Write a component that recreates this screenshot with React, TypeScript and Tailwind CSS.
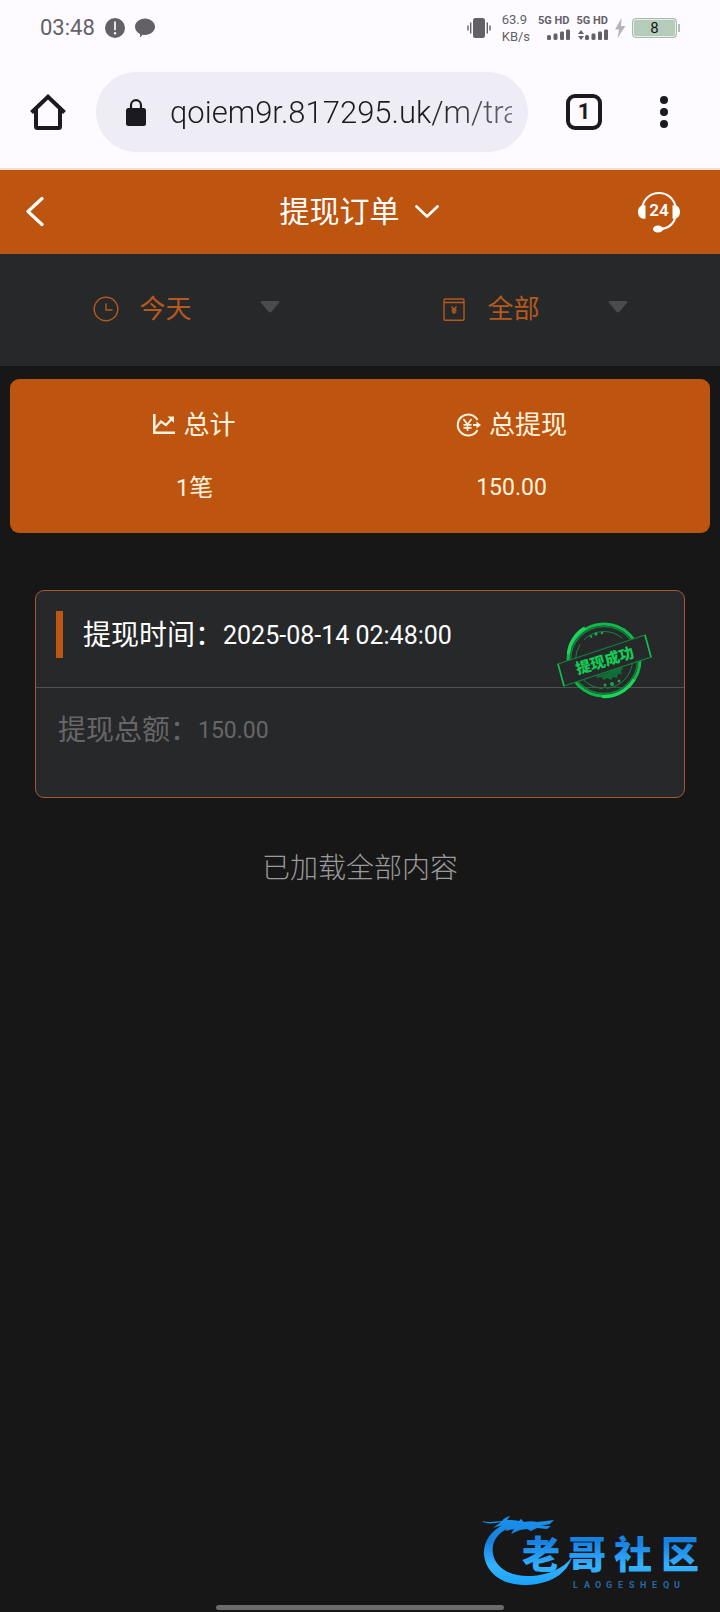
import React from 'react';

const filterIconClass = 'h-[26px] w-[26px] shrink-0';

function SignalBars({ roaming = false }: { roaming?: boolean }) {
  return (
    <div className="flex flex-col items-end gap-[2px]">
      <span className="text-[11px] leading-[12px] font-bold whitespace-nowrap">5G HD</span>
      <svg viewBox="0 0 31 12" className="h-[12px] w-[31px]" fill="currentColor" aria-hidden="true">
        {roaming && <path d="M4 1 7 5H1zM4 11 1 7h6z" />}
        <rect x="8" y="6" width="4" height="5" rx="1.6" />
        <rect x="14.500" y="4.500" width="4" height="6.500" rx="1.400" />
        <rect x="21" y="2.500" width="4" height="8.500" rx="1.200" />
        <rect x="27" y="0.500" width="4" height="10.500" rx="1.200" />
      </svg>
    </div>
  );
}

function StatusBar() {
  return (
    <div className="flex h-14 items-center justify-between pr-10 pl-10 text-[#636166]">
      <div className="flex items-center gap-[10px]">
        <time className="text-[22px] leading-none">03:48</time>
        <svg viewBox="0 0 20 20" className="h-5 w-5" aria-hidden="true">
          <circle cx="10" cy="10" r="10" fill="currentColor" />
          <path d="M10 4v7.500" stroke="#fdfbff" strokeWidth="1.700" strokeLinecap="round" />
          <circle cx="10" cy="15.300" r="1.200" fill="#fdfbff" />
        </svg>
        <svg viewBox="0 0 20 20" className="h-5 w-5" fill="currentColor" aria-hidden="true">
          <path d="M10 .5c5.500 0 10 3.700 10 8.300S15.500 17 10 17c-.9 0-1.700-.1-2.500-.2-.6.900-1.500 1.900-2.600 2.700.3-1.200.3-2.500.1-3.500C2 14.500 0 11.900 0 8.800 0 4.200 4.500.5 10 .5z" />
        </svg>
      </div>
      <div className="flex items-center">
        <svg viewBox="0 0 24 20" className="mr-[11px] h-5 w-6" aria-hidden="true">
          <rect x="6" y="0" width="12" height="20" rx="2.500" fill="currentColor" />
          <path d="M1 8v4M3.700 5v10M20.300 5v10M23 8v4" stroke="currentColor" strokeWidth="1.400" strokeLinecap="round" />
        </svg>
        <div className="mr-2 text-[13px] leading-[17px]">
          <div>63.9</div>
          <div>KB/s</div>
        </div>
        <div className="flex gap-[7px]">
          <SignalBars />
          <SignalBars roaming />
        </div>
        <svg viewBox="0 0 12 20" className="mx-[6px] h-5 w-3" fill="#b5b3b8" aria-hidden="true">
          <path d="M7.500 0 1 11.500h4L3.500 20 11.500 8H7z" />
        </svg>
        <div className="flex items-center gap-px">
          <div className="flex h-5 w-[45px] items-center justify-center rounded-[4px] border border-[#a9b8ad] bg-[#b5ccba] text-[15px] leading-none text-[#17171a] ring-1 ring-[#e6f0e8] ring-inset">
            8
          </div>
          <div className="h-2 w-[2px] bg-[#b9b8bb]" />
        </div>
      </div>
    </div>
  );
}

function BrowserBar() {
  return (
    <div className="flex h-28 items-center border-0 pr-8 pl-[30px] text-[#1b1b1f]">
      <button type="button" aria-label="主页" className="shrink-0">
        <svg viewBox="0 0 36 36" className="h-9 w-9" fill="none" stroke="currentColor" strokeWidth="4" aria-hidden="true">
          <path d="M1.500 18.500 18 2.800l16.500 15.700" strokeLinejoin="miter" />
          <path d="M6 15v17.500q0 1.500 1.500 1.500h21q1.500 0 1.500-1.500V15" />
        </svg>
      </button>
      <div className="mr-[38px] ml-[30px] flex h-20 min-w-0 flex-1 items-center rounded-full bg-[#eeecf5] pr-4 pl-[30px]">
        <svg viewBox="0 0 20 27" className="mr-6 h-[27px] w-5 shrink-0" aria-hidden="true">
          <path d="M5 10V6.200a5 5 0 0 1 10 0V10" fill="none" stroke="currentColor" strokeWidth="2.200" />
          <rect y="9" width="20" height="18" rx="2.500" fill="currentColor" />
        </svg>
        <input
          aria-label="网址"
          defaultValue="qoiem9r.817295.uk/m/tra"
          className="h-12 w-full min-w-0 flex-1 bg-linear-to-r from-[#1b1b1f] from-75% to-[#6a6972] bg-clip-text text-[31px] font-light text-transparent outline-none"
        />
      </div>
      <button type="button" aria-label="标签页" className="flex h-9 w-9 shrink-0 items-center justify-center rounded-[9px] border-4 border-[#1b1b1f] text-[22px] leading-none font-bold">
        1
      </button>
      <button type="button" aria-label="菜单" className="ml-[38px] flex w-12 shrink-0 justify-center">
        <svg viewBox="0 0 8 32" className="h-8 w-2" fill="currentColor" aria-hidden="true">
          <circle cx="4" cy="4" r="4" />
          <circle cx="4" cy="16" r="4" />
          <circle cx="4" cy="28" r="4" />
        </svg>
      </button>
    </div>
  );
}

function PageHeader() {
  return (
    <header className="grid h-[84px] grid-cols-[1fr_auto_1fr] items-center bg-[#bd540f] pr-10 pl-[26px] text-white">
      <button type="button" aria-label="返回" className="justify-self-start">
        <svg viewBox="0 0 18 30" className="h-[30px] w-[18px]" fill="none" stroke="currentColor" strokeWidth="3.200" strokeLinecap="round" strokeLinejoin="round" aria-hidden="true">
          <path d="M16 1.500 2 14.500l14 13" />
        </svg>
      </button>
      <button type="button" className="ml-3 flex items-center gap-[15px]">
        <h1 className="text-[30px] leading-none">提现订单</h1>
        <svg viewBox="0 0 24 14" className="h-[14px] w-6" fill="none" stroke="currentColor" strokeWidth="2.600" strokeLinecap="round" strokeLinejoin="round" aria-hidden="true">
          <path d="m1.500 1.500 10.500 10 10.500-10" />
        </svg>
      </button>
      <button type="button" aria-label="24小时客服" className="justify-self-end">
        <svg viewBox="0 0 42 42" className="h-[42px] w-[42px]" aria-hidden="true">
          <path d="M4 17C6 7 13 2 21 2s15 5 17 15M38 23c-1 9-7 15-17 15" fill="none" stroke="currentColor" strokeWidth="2.200" />
          <path d="M7.500 14.500v13C3 28.500 0 25.500 0 21s3-7.500 7.500-6.500zM34.500 14.500v13C39 28.500 42 25.500 42 21s-3-7.500-7.500-6.500z" fill="currentColor" />
          <ellipse cx="20" cy="38" rx="5" ry="3.600" fill="currentColor" />
          <text x="21" y="25" textAnchor="middle" fontSize="17" fontWeight="600" fill="currentColor">24</text>
        </svg>
      </button>
    </header>
  );
}

function FilterSelect({ label, options, children }: { label: string; options: string[]; children: React.ReactNode }) {
  return (
    <label className="flex items-center justify-center">
      {children}
      <select aria-label={label} className="mr-2 ml-[21px] w-28 appearance-none bg-transparent text-[26px] leading-9 outline-none">
        {options.map((o) => (
          <option key={o}>{o}</option>
        ))}
      </select>
      <svg viewBox="0 0 20 12" className="mb-1 h-3 w-5 shrink-0" fill="#4b4b4e" aria-hidden="true">
        <path d="M1.500 0h17q1.500.5.500 1.800l-7.500 9q-1.500 1.400-3 0l-7.500-9Q0 .5 1.500 0z" />
      </svg>
    </label>
  );
}

function Filters() {
  return (
    <section className="grid h-28 grid-cols-2 items-center bg-[#27282a] px-3 pb-[2px] text-[#b5591d]">
      <FilterSelect label="日期" options={['今天', '昨天', '近七天']}>
        <svg viewBox="0 0 26 26" className={filterIconClass} fill="none" stroke="currentColor" strokeWidth="1.400" aria-hidden="true">
          <circle cx="13" cy="13" r="11.800" />
          <path d="M13 7.500V14h6.500" />
        </svg>
      </FilterSelect>
      <FilterSelect label="类型" options={['全部', '成功', '失败']}>
        <svg viewBox="0 0 26 26" className={filterIconClass} fill="none" stroke="currentColor" strokeWidth="1.400" aria-hidden="true">
          <path d="M3 6.500V23q0 1.300 1.300 1.300h17.400Q23 24.300 23 23V6.500zM3 6.500V4.300Q3 3 4.300 3h17.400Q23 3 23 4.300V6.500" />
          <path d="m10.500 10.500 2.500 3 2.500-3M13 13.500V18M10.500 14h5M10.800 16h4.400" />
        </svg>
      </FilterSelect>
    </section>
  );
}

function Summary() {
  return (
    <section className="mx-[10px] mt-[13px] grid h-[154px] grid-cols-2 rounded-[9px] bg-[#bd540f] pt-7 pr-10 pl-[26px] text-center text-[#fff3df]">
      <div>
        <div className="flex h-9 items-center justify-center gap-2">
          <svg viewBox="0 0 22 22" className="h-[22px] w-[22px]" fill="none" stroke="currentColor" strokeWidth="2.600" aria-hidden="true">
            <path d="M1.300 0v18.700H22" />
            <path d="m2 14.500 6-7 5 3.500 6-6.500" strokeWidth="2.200" />
            <path d="M14.500 2.500H21V9z" fill="currentColor" stroke="none" />
          </svg>
          <span className="text-[26px] leading-9">总计</span>
        </div>
        <div className="mt-[27px] text-[24px] leading-9">1笔</div>
      </div>
      <div>
        <div className="flex h-9 items-center justify-center gap-2">
          <svg viewBox="0 0 25 24" className="h-6 w-[25px]" fill="none" stroke="currentColor" strokeWidth="2" aria-hidden="true">
            <path d="M21.500 7A10.500 10.500 0 1 0 21.500 17" />
            <path d="m7.500 6 4 5.500 4-5.500M11.500 11.500V18M7.500 11.800h8M7.500 14.800h8" strokeWidth="1.700" />
            <path d="M17 12h5" />
            <path d="m20.500 8.500 4.500 3.500-4.500 3.500z" fill="currentColor" stroke="none" />
          </svg>
          <span className="text-[26px] leading-9">总提现</span>
        </div>
        <div className="mt-[27px] text-[23px] leading-9">150.00</div>
      </div>
    </section>
  );
}

function SuccessStamp() {
  return (
    <svg viewBox="0 0 96 78" role="img" aria-label="提现成功" className="absolute top-[30px] right-8 h-[78px] w-24" fill="none" stroke="#10b94b">
      <circle cx="48" cy="39" r="36" strokeWidth="3" />
      <circle cx="48" cy="39" r="33.500" stroke="#0d8039" strokeWidth="1.500" />
      <path d="M12.500 33C13 22 20 12 29 7M46 75.500c12 1 25-5 32-17" stroke="#1fd35c" strokeWidth="3.200" />
      <circle cx="48" cy="39" r="28.500" stroke="#158343" strokeWidth="1" strokeDasharray="42 4 60 6" />
      <g fill="#12a947" stroke="none">
        <circle cx="35" cy="15.500" r="1.300" />
        <circle cx="40" cy="13" r="1.700" />
        <circle cx="46" cy="12" r="1.300" />
        <circle cx="49" cy="64" r="1.500" />
        <circle cx="56" cy="63" r="2" />
        <circle cx="63" cy="60" r="1.500" />
        <path d="M37 55q13-1 27-10l3 2-2 3 1 3-4 0-1 4-4-1-2 3-4-2-3 2-3-3-4 1-1-3z" fill="#0e6f36" />
      </g>
      <path d="M2 43 89 14l6 22L8 65z" fill="#27282a" stroke="#12813b" strokeWidth="1.300" />
      <path d="m2 43 6 22M89 14l6 22" stroke="#14bd4e" strokeWidth="1.600" />
      <text x="49" y="45" textAnchor="middle" transform="rotate(-17 49 40)" fontSize="15" fontWeight="900" fill="#12cc53" stroke="none">
        提现成功
      </text>
    </svg>
  );
}

function OrderCard() {
  return (
    <article className="relative mx-[35px] mt-[57px] h-[208px] rounded-[9px] border border-[#a3582e] bg-[#27282a]">
      <div className="flex h-[97px] items-start border-b border-[#505052] pt-5 pl-5">
        <span className="h-[47px] w-[7px] bg-[#bd5814]" />
        <p className="ml-5 flex h-[49px] items-center text-white">
          <span className="text-[28px]">提现时间：</span>
          <time className="text-[25px]">2025-08-14 02:48:00</time>
        </p>
      </div>
      <p className="flex h-[86px] items-center pl-[22px] text-[#666668]">
        <span className="text-[28px]">提现总额：</span>
        <span className="text-[23px]">150.00</span>
      </p>
      <SuccessStamp />
    </article>
  );
}

function CommunityLogo() {
  return (
    <svg viewBox="0 0 226 78" role="img" aria-label="老哥社区" className="h-[78px] w-[226px]">
      <defs>
        <linearGradient id="logo-blue" gradientUnits="userSpaceOnUse" x1="0" y1="4" x2="0" y2="76">
          <stop offset="0" stopColor="#1a93ee" />
          <stop offset="0.350" stopColor="#1680e0" />
          <stop offset="0.700" stopColor="#35b1ff" />
          <stop offset="1" stopColor="#14a0fb" />
        </linearGradient>
      </defs>
      <g fill="url(#logo-blue)">
        <path d="M27 12C13 18 5 30 6 43c2 19 20 31 43 30 23-1 40-11 45-28-9 12-24 18-41 19C34 65 18 57 15 42 13 29 20 20 33 15z" />
        <path d="M4 9c8 2 14 0 20 0 2-3 5-4 8-5l-3 4c5 0 8 0 12 1l2-2 3 3c5-1 9-1 13 0l17-2-4 4-9 2 10 0-4 3-10-1-6 3-4-2-7 1-9 4 3-5-9 2 4-5c-6-1-11 0-16 2l8-6C17 11 9 13 4 9z" />
        <text x="44 90 136 183" y="56" fontSize="38" fontWeight="900">老哥社区</text>
      </g>
      <text x="95 106 117 128 140 151 162 174 185 196" y="76" fontSize="9" fontWeight="700" fill="#2468a6">LAOGESHEQU</text>
    </svg>
  );
}

export default function App() {
  return (
    <div className="flex min-h-screen flex-col bg-[#171717] font-[Roboto,'Noto_Sans_CJK_SC',sans-serif]">
      <div className="border-b-2 border-[#f8ddd2] bg-[#fdfbff]">
        <StatusBar />
        <BrowserBar />
      </div>
      <PageHeader />
      <Filters />
      <main>
        <Summary />
        <OrderCard />
        <p className="mt-[51px] text-center text-[28px] leading-10 font-light text-[#9b9b9b]">已加载全部内容</p>
      </main>
      <footer className="mt-auto flex flex-col items-center pb-[2px]">
        <div className="mr-4 self-end">
          <CommunityLogo />
        </div>
        <div className="mt-[15px] h-[5px] w-2/5 rounded-full bg-[#6b6b6b]" />
      </footer>
    </div>
  );
}
